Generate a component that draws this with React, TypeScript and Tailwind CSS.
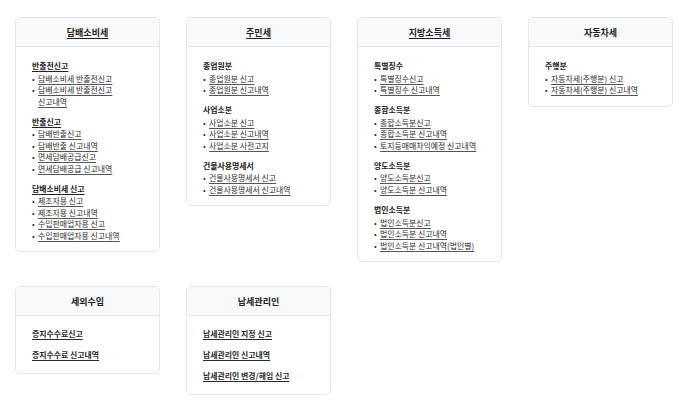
import React from "react";

type Group = { title: string; underline?: boolean; items: React.ReactNode[] };
type Card = { title: string; underline?: boolean; groups?: Group[]; links?: string[] };

const cards1: Card[] = [
  {
    title: "담배소비세",
    underline: true,
    groups: [
      {
        title: "반출전신고",
        underline: true,
        items: [
          "담배소비세 반출전신고",
          <>
            담배소비세 반출전신고
            <br />
            신고내역
          </>,
        ],
      },
      {
        title: "반출신고",
        underline: true,
        items: ["담배반출신고", "담배반출 신고내역", "면세담배공급신고", "면세담배공급 신고내역"],
      },
      {
        title: "담배소비세 신고",
        underline: true,
        items: ["제조자용 신고", "제조자용 신고내역", "수입판매업자용 신고", "수입판매업자용 신고내역"],
      },
    ],
  },
  {
    title: "주민세",
    underline: true,
    groups: [
      { title: "종업원분", items: ["종업원분 신고", "종업원분 신고내역"] },
      { title: "사업소분", items: ["사업소분 신고", "사업소분 신고내역", "사업소분 사전고지"] },
      { title: "건물사용명세서", items: ["건물사용명세서 신고", "건물사용명세서 신고내역"] },
    ],
  },
  {
    title: "지방소득세",
    underline: true,
    groups: [
      { title: "특별징수", items: ["특별징수신고", "특별징수 신고내역"] },
      { title: "종합소득분", items: ["종합소득분신고", "종합소득분 신고내역", "토지등매매차익예정 신고내역"] },
      { title: "양도소득분", items: ["양도소득분신고", "양도소득분 신고내역"] },
      { title: "법인소득분", items: ["법인소득분신고", "법인소득분 신고내역", "법인소득분 신고내역(법인별)"] },
    ],
  },
  {
    title: "자동차세",
    groups: [{ title: "주행분", items: ["자동차세(주행분) 신고", "자동차세(주행분) 신고내역"] }],
  },
];

const cards2: Card[] = [
  { title: "세외수입", links: ["증지수수료신고", "증지수수료 신고내역"] },
  { title: "납세관리인", links: ["납세관리인 지정 신고", "납세관리인 신고내역", "납세관리인 변경/해임 신고"] },
];

function CardView({ card }: { card: Card }) {
  return (
    <div className="w-[145px] rounded-[5px] border border-[#e3e5e8] bg-white overflow-hidden">
      <div className="h-[29px] bg-[#f8f9fa] border-b border-[#e6e8eb] flex items-center justify-center">
        <span
          className={
            "text-[9px] font-semibold text-[#222] leading-none " +
            (card.underline ? "underline underline-offset-[1.5px]" : "")
          }
        >
          {card.title}
        </span>
      </div>
      {card.groups && (
        <div className="pl-[16px] pr-[8px] pt-[13px] pb-[10px] flex flex-col gap-[8.3px]">
          {card.groups.map((g, i) => (
            <div key={i} className="flex flex-col">
              <div
                className={
                  "text-[7.9px] leading-[11.5px] font-semibold text-[#222] mb-[1.3px] " +
                  (g.underline ? "underline underline-offset-[1.5px]" : "")
                }
              >
                {g.title}
              </div>
              {g.items.map((it, j) => (
                <div key={j} className="flex text-[7.9px] leading-[11.5px] text-[#2a2a2a]">
                  <span className="w-[6px] shrink-0">•</span>
                  <span className="underline underline-offset-[1.5px] decoration-[#555]">{it}</span>
                </div>
              ))}
            </div>
          ))}
        </div>
      )}
      {card.links && (
        <div className="pl-[16px] pr-[8px] pt-[12px] pb-[12px] flex flex-col gap-[9.5px]">
          {card.links.map((l, i) => (
            <div key={i} className="text-[7.9px] leading-[11.5px] font-semibold text-[#2a2a2a]">
              <span className="underline underline-offset-[1.5px]">{l}</span>
            </div>
          ))}
        </div>
      )}
    </div>
  );
}

export default function App() {
  return (
    <div
      className="w-[680px] h-[400px] bg-white pl-[15px] pt-[17px] flex flex-col gap-[24px]"
      style={{ fontFamily: '"Noto Sans CJK KR", "Noto Sans", sans-serif' }}
    >
      <div className="flex gap-[26px] items-start">
        {cards1.map((c, i) => (
          <CardView key={i} card={c} />
        ))}
      </div>
      <div className="flex gap-[26px] items-start">
        {cards2.map((c, i) => (
          <CardView key={i} card={c} />
        ))}
      </div>
    </div>
  );
}
